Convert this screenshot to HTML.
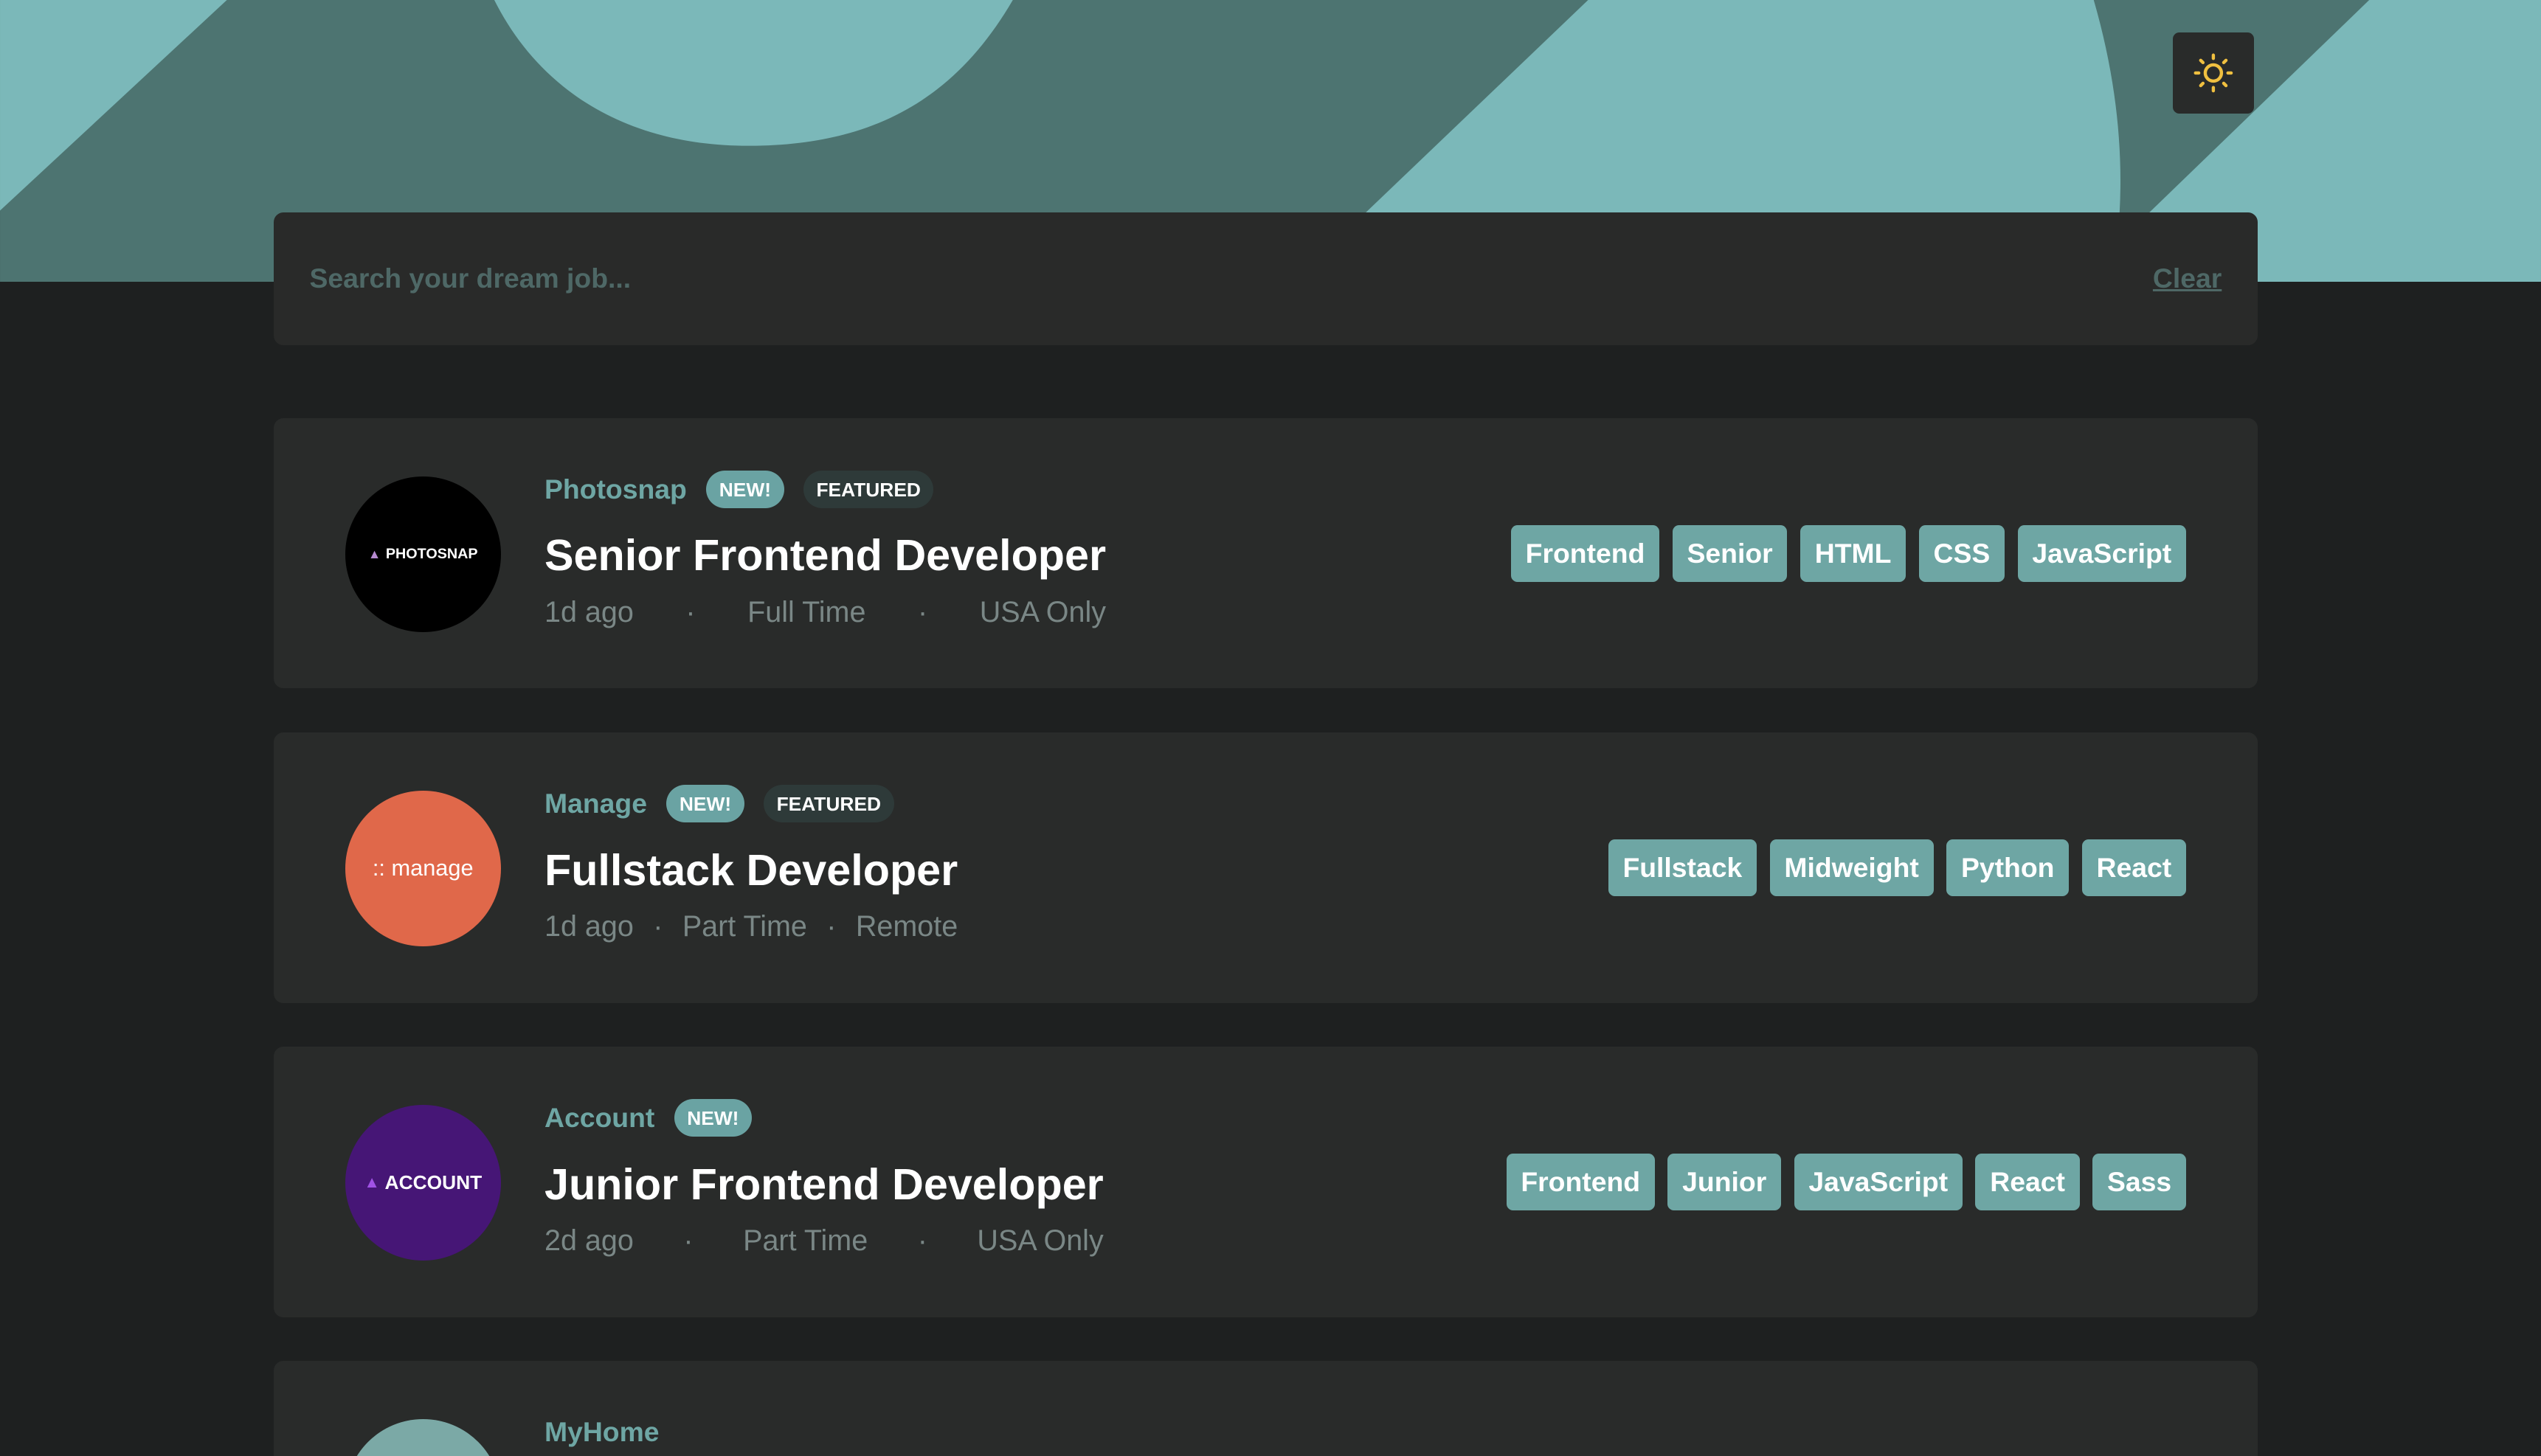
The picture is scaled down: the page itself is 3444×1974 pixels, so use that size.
<!DOCTYPE html>
<html><head><meta charset="utf-8"><style>
html,body{margin:0;padding:0;background:#1e2020;overflow:hidden;width:3444px;height:1974px}
#w{zoom:2.19643;width:1568px;height:899px;position:relative;overflow:hidden;font-family:"Liberation Sans",sans-serif;background:#1e2020}
.hdr{position:absolute;left:0;top:0}
.theme{position:absolute;left:1341px;top:20px;width:50px;height:50px;background:#292b2a;border-radius:4px}
.search{position:absolute;left:169px;top:131px;width:1224px;height:82px;background:#292a29;border-radius:6px;color:#4e6866;font-weight:bold;font-size:17px}
.search .ph{position:absolute;left:22px;top:31px}
.search .cl{position:absolute;right:22px;top:31px;text-decoration:underline}
.card{position:absolute;left:169px;width:1224px;height:167px;background:#292b2a;border-radius:6px;overflow:hidden}
.logo{position:absolute;left:44px;top:36px;width:96px;height:96px;border-radius:50%;color:#fff;font-weight:bold;display:flex;align-items:center;justify-content:center}
.info{position:absolute;left:167px;top:32px;display:inline-flex;flex-direction:column}
.co{display:flex;align-items:center;height:24px;color:#6ea6a4;font-weight:bold;font-size:17px}
.pill{margin-left:12px;border-radius:12px;color:#fff;font-size:12px;font-weight:bold;padding:5px 8px 4px;line-height:14px}
.new{background:#6aa3a3}.feat{background:#2e3a39}
.title{color:#fff;font-weight:bold;font-size:27px;margin-top:14px;line-height:30px;white-space:nowrap}
.meta{display:flex;justify-content:space-between;color:#7a8786;font-size:18px;margin-top:10px;white-space:nowrap}
.tags{position:absolute;right:44px;top:66px;display:flex;gap:8px}
.tag{background:#6ea6a4;color:#fff;font-weight:bold;font-size:17px;height:35px;line-height:35px;padding:0 9px;border-radius:4px}
</style></head><body><div id="w">
<svg class="hdr" width="1568" height="174" viewBox="0 0 1568 174">
<rect width="1568" height="174" fill="#4d7471"/>
<polygon points="0,0 140,0 0,130" fill="#7bb8b9"/>
<path d="M305 0 L625 0 C590 60 540 90 462 90 C380 90 330 50 305 0 Z" fill="#7bb8b9"/>
<path d="M980 0 L1292 0 Q1318 90 1303 174 L798 174 Z" fill="#7bb8b9"/>
<polygon points="1462,0 1568,0 1568,174 1282,174" fill="#7bb8b9"/>
</svg>
<div class="theme"><svg width="50" height="50" viewBox="0 0 50 50"><g stroke="#f0c040" stroke-width="2" stroke-linecap="round" fill="none"><circle cx="25" cy="25" r="5"/><path d="M25 14v2M25 34v2M14 25h2M34 25h2M17.2 17.2l1.4 1.4M31.4 31.4l1.4 1.4M17.2 32.8l1.4-1.4M31.4 18.6l1.4-1.4"/></g></svg></div>
<div class="search"><span class="ph">Search your dream job...</span><span class="cl">Clear</span></div>

<div class="card" style="top:258px">
<div class="logo" style="background:#000;font-size:9px"><span style="color:#b68ad0;font-size:8px;margin-right:3px">▲</span>PHOTOSNAP</div>
<div class="info"><div class="co">Photosnap<span class="pill new">NEW!</span><span class="pill feat">FEATURED</span></div>
<div class="title">Senior Frontend Developer</div>
<div class="meta"><span>1d ago</span><span>·</span><span>Full Time</span><span>·</span><span>USA Only</span></div></div>
<div class="tags"><span class="tag">Frontend</span><span class="tag">Senior</span><span class="tag">HTML</span><span class="tag">CSS</span><span class="tag">JavaScript</span></div>
</div>

<div class="card" style="top:452px">
<div class="logo" style="background:#e0684a;font-size:14px;font-weight:normal">::&nbsp;manage</div>
<div class="info"><div class="co">Manage<span class="pill new">NEW!</span><span class="pill feat">FEATURED</span></div>
<div class="title">Fullstack Developer</div>
<div class="meta"><span>1d ago</span><span>·</span><span>Part Time</span><span>·</span><span>Remote</span></div></div>
<div class="tags"><span class="tag">Fullstack</span><span class="tag">Midweight</span><span class="tag">Python</span><span class="tag">React</span></div>
</div>

<div class="card" style="top:646px">
<div class="logo" style="background:#461676;font-size:12px"><span style="color:#a152e6;font-size:10px;margin-right:3px">▲</span>ACCOUNT</div>
<div class="info"><div class="co">Account<span class="pill new">NEW!</span></div>
<div class="title">Junior Frontend Developer</div>
<div class="meta"><span>2d ago</span><span>·</span><span>Part Time</span><span>·</span><span>USA Only</span></div></div>
<div class="tags"><span class="tag">Frontend</span><span class="tag">Junior</span><span class="tag">JavaScript</span><span class="tag">React</span><span class="tag">Sass</span></div>
</div>

<div class="card" style="top:840px;height:59px;border-radius:6px 6px 0 0">
<div class="logo" style="background:#7ba9a6"></div>
<div class="info"><div class="co">MyHome</div></div>
</div>
</div></body></html>
